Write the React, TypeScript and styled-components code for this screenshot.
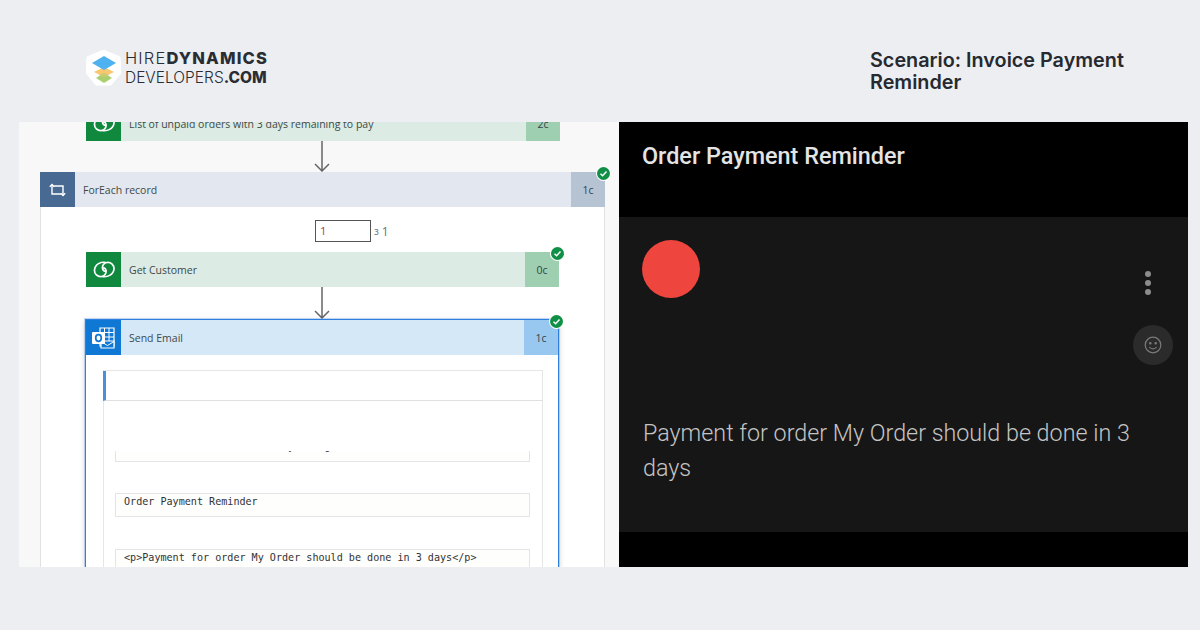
import React from 'react';
import styled, { createGlobalStyle } from 'styled-components';

const GlobalStyle = createGlobalStyle`
  html, body {
    margin: 0;
    padding: 0;
    background: #eceef2;
  }
  * {
    box-sizing: border-box;
  }
`;

const Page = styled.div`
  width: 1200px;
  height: 630px;
  overflow: hidden;
  background: #eceef2;
`;

const Header = styled.header`
  display: flex;
  align-items: center;
  justify-content: space-between;
  height: 122px;
  padding: 0 0 0 86px;
`;

const Logo = styled.div`
  display: flex;
  align-items: center;
  gap: 4px;
  margin-top: 14px;
`;

const LogoText = styled.div`
  font-family: Inter, sans-serif;
  color: #2a2d33;
  line-height: 20px;
  white-space: nowrap;
  b {
    font-weight: 800;
  }
  span {
    font-weight: 300;
  }
`;

const LogoLine = styled.div<{ $size: number; $spacing: number }>`
  font-size: ${({ $size }) => $size}px;
  letter-spacing: ${({ $spacing }) => $spacing}px;
`;

const Title = styled.h1`
  width: 330px;
  margin: 20px 0 0;
  padding-right: 40px;
  font-family: Inter, sans-serif;
  font-size: 19.8px;
  line-height: 22px;
  font-weight: 600;
  color: #26292f;
`;

const Screen = styled.main`
  display: grid;
  grid-template-columns: 600px 569px;
  height: 445px;
  margin-left: 19px;
`;

const FlowPanel = styled.section`
  display: flex;
  flex-direction: column;
  overflow: hidden;
  background: #f8f8f8;
  font-family: 'Open Sans', sans-serif;
`;

const TopCard = styled.div`
  margin: -16px 0 0 67px;
`;

const Connector = styled.svg<{ $indent: number }>`
  display: block;
  flex: none;
  margin-left: ${({ $indent }) => $indent}px;
`;

const Card = styled.div<{ $width: number; $indent?: number; $selected?: boolean }>`
  position: relative;
  display: flex;
  flex-direction: column;
  flex: none;
  width: ${({ $width }) => $width}px;
  margin-left: ${({ $indent }) => $indent ?? 0}px;
  ${({ $selected }) =>
    $selected &&
    `
    border: 1px solid #2f7fe0;
    border-bottom: 0;
    background: #fff;
    box-shadow: 0 0 0 1px rgba(70, 140, 230, 0.3), 0 2px 6px rgba(0, 0, 0, 0.2);
  `}
`;

const CardHead = styled.div<{ $bg: string }>`
  display: flex;
  align-items: center;
  height: 35px;
  background: ${({ $bg }) => $bg};
  font-size: 10.5px;
  color: #3d4a4a;
`;

const CardIcon = styled.div<{ $bg: string }>`
  display: flex;
  align-items: center;
  justify-content: center;
  flex: none;
  width: 35px;
  height: 35px;
  background: ${({ $bg }) => $bg};
`;

const CardLabel = styled.div`
  flex: 1;
  padding: 1px 0 0 8px;
`;

const Duration = styled.div<{ $bg: string }>`
  flex: none;
  width: 34px;
  height: 35px;
  padding-top: 1px;
  line-height: 35px;
  text-align: center;
  background: ${({ $bg }) => $bg};
  color: #34424c;
`;

const StatusBadge = styled.div`
  position: absolute;
  top: -5px;
  right: -5px;
  display: flex;
  align-items: center;
  justify-content: center;
  width: 13px;
  height: 13px;
  border-radius: 50%;
  background: #0f9046;
  box-shadow: 0 0 0 1px #fff;
`;

const Loop = styled.div`
  flex: none;
  width: 565px;
  height: 400px;
  margin-left: 21px;
  border: 1px solid #e2e2e2;
  border-top: 0;
  background: #fff;
`;

const LoopBody = styled.div`
  display: flex;
  flex-direction: column;
  padding-left: 45px;
`;

const Pager = styled.div`
  display: flex;
  align-items: center;
  gap: 2px;
  height: 22px;
  margin: 13px 0 10px 229px;
  color: #66727c;
  font-size: 10px;
`;

const PagerInput = styled.div`
  width: 56px;
  height: 22px;
  padding-left: 4px;
  border: 1px solid #555;
  font-size: 11.5px;
  line-height: 20px;
  color: #c0392b;
`;

const PagerLabel = styled.span`
  margin-left: 1px;
`;

const PagerTotal = styled.span`
  margin-left: 1px;
  font-size: 12px;
`;

const EmailBody = styled.div`
  height: 213px;
  padding: 15px 15px 0 17px;
`;

const Form = styled.div`
  height: 200px;
  border: 1px solid #e6e6e6;
  border-bottom: 0;
`;

const FormBar = styled.div`
  height: 30px;
  border-left: 3px solid #4a90d9;
  border-bottom: 1px solid #e0e0e0;
  margin: 0 0 50px -1px;
`;

const Field = styled.div<{ $height: number; $gap: number; $open?: boolean }>`
  height: ${({ $height }) => $height}px;
  margin: 0 12px ${({ $gap }) => $gap}px 11px;
  padding-left: 8px;
  overflow: hidden;
  border: 1px solid #e4e4e4;
  border-width: ${({ $open }) => ($open ? '0 1px 1px 1px' : '1px')};
  background: #fefefd;
  font-family: 'DejaVu Sans Mono', 'Liberation Mono', monospace;
  font-size: 10.1px;
  line-height: 16px;
  color: #333;
  white-space: pre;
`;

const ClippedLine = styled.div`
  margin-top: -12px;
`;

const DarkPanel = styled.section`
  display: flex;
  flex-direction: column;
  background: #000;
  font-family: Roboto, sans-serif;
`;

const DarkTop = styled.div`
  display: flex;
  align-items: center;
  height: 95px;
  padding: 0 0 27px 23px;
`;

const DarkTitle = styled.h2`
  margin: 0;
  font-size: 23.4px;
  font-weight: 500;
  color: #e4e4e4;
`;

const Message = styled.div`
  position: relative;
  height: 315px;
  padding: 23px 0 0 23px;
  background: #161616;
`;

const Avatar = styled.div`
  width: 58px;
  height: 58px;
  border-radius: 50%;
  background: #ee463e;
`;

const Dots = styled.div`
  position: absolute;
  top: 54px;
  right: 37px;
  display: flex;
  flex-direction: column;
  gap: 2.8px;
  span {
    width: 6px;
    height: 6px;
    border-radius: 50%;
    background: #8c8c8c;
  }
`;

const ReactionButton = styled.div`
  position: absolute;
  top: 108px;
  right: 15px;
  display: flex;
  align-items: center;
  justify-content: center;
  width: 40px;
  height: 40px;
  border-radius: 50%;
  background: #2b2b2b;
`;

const MessageText = styled.p`
  width: 510px;
  margin: 118px 0 0 1px;
  font-size: 23.3px;
  font-weight: 300;
  line-height: 35px;
  color: #c4c4c4;
`;

const HexLogo = () => (
  <svg width="35" height="36" viewBox="0 0 35 36">
    <path d="M17.500 0 34 7 35 23 25 35 10 35 0 23 1 7Z" fill="#fff" stroke="#fff" strokeLinejoin="round" />
    <path d="M18 23 26 28 18 33 10 28Z" fill="#a9cf6e" />
    <path d="M18 17 28 22 18 27 8 22Z" fill="#f7c772" />
    <path d="M18 23 23 25 18 27 13 25Z" fill="#c7cb6f" />
    <path d="M18 6 30 13 18 20 6 13Z" fill="#4fb2f0" />
  </svg>
);

const DataverseIcon = () => (
  <svg width="22" height="17" viewBox="0 0 22 17" fill="none" stroke="#fff" strokeWidth="1.700">
    <path d="M13 1.500C8 .5 2 3 1.500 9c-.3 4 3 7 7 6.500 3-.4 5-3 4.500-6-.3-2-2-3-3.500-2.500" />
    <path d="M9 15.500c5 1 11.500-1.500 12-7.500.3-4-3-7-7-6.500-3 .4-5 3-4.500 6 .3 2 2 3 3.500 2.500" />
  </svg>
);

const LoopIcon = () => (
  <svg width="17" height="14" viewBox="0 0 17 14" fill="none" stroke="#fff" strokeWidth="1.400">
    <path d="M3 1.500V11H12M14 12.500V3H5" />
    <path d="M.8 3.700 3 1.400l2.200 2.300M11.800 10.300l2.200 2.300 2.200-2.300" />
  </svg>
);

const OutlookIcon = () => (
  <svg width="23" height="22" viewBox="0 0 23 22">
    <path d="M8 1h14v18H8z" fill="none" stroke="#fff" strokeWidth="1.200" />
    <path d="M12.500 1v14M17 1v14M8 5.500h14M8 10h14" stroke="#fff" strokeWidth="1" />
    <path d="M9 14h13v7H9z" fill="#0f78d4" stroke="#fff" strokeWidth="1.200" />
    <path d="M9 14.500l6.500 4 6.500-4" fill="none" stroke="#fff" strokeWidth="1" />
    <rect x="0" y="5" width="13" height="12" rx="1" fill="#fff" />
    <ellipse cx="6.500" cy="11" rx="2.800" ry="3.300" fill="none" stroke="#0f78d4" strokeWidth="1.700" />
  </svg>
);

const Check = () => (
  <svg width="9" height="9" viewBox="0 0 9 9" fill="none" stroke="#fff" strokeWidth="1.500">
    <path d="M1.500 4.700 3.600 6.700 7.500 2.500" />
  </svg>
);

const Arrow = ({ height, indent }: { height: number; indent: number }) => (
  <Connector $indent={indent} width="16" height={height} viewBox={`0 0 16 ${height}`} fill="none" stroke="#666" strokeWidth="1.500">
    <path d={`M8 0V${height - 1}M1 ${height - 8}l7 7 7-7`} />
  </Connector>
);

const Smile = () => (
  <svg width="18" height="18" viewBox="0 0 18 18" fill="none" stroke="#7a7a7a" strokeWidth="1.200">
    <circle cx="9" cy="9" r="7.800" />
    <circle cx="6.300" cy="7.300" r="0.700" fill="#7a7a7a" />
    <circle cx="11.700" cy="7.300" r="0.700" fill="#7a7a7a" />
    <path d="M5.300 11c1 1.300 2.200 1.900 3.700 1.900s2.700-.6 3.700-1.900" />
  </svg>
);

export default function App() {
  return (
    <Page>
      <GlobalStyle />
      <Header>
        <Logo>
          <HexLogo />
          <LogoText>
            <LogoLine $size={16.5} $spacing={1.15}>
              <span>HIRE</span>
              <b>DYNAMICS</b>
            </LogoLine>
            <LogoLine $size={15.5} $spacing={0}>
              <span>DEVELOPERS</span>
              <b>.COM</b>
            </LogoLine>
          </LogoText>
        </Logo>
        <Title>Scenario: Invoice Payment Reminder</Title>
      </Header>
      <Screen>
        <FlowPanel>
          <TopCard>
            <Card $width={474}>
              <CardHead $bg="#dcebe3">
                <CardIcon $bg="#10893e">
                  <DataverseIcon />
                </CardIcon>
                <CardLabel>List of unpaid orders with 3 days remaining to pay</CardLabel>
                <Duration $bg="#9fcfb1">2c</Duration>
              </CardHead>
            </Card>
          </TopCard>
          <Arrow height={31} indent={295} />
          <Card $width={565} $indent={21}>
            <CardHead $bg="#e3e7ef">
              <CardIcon $bg="#486991">
                <LoopIcon />
              </CardIcon>
              <CardLabel>ForEach record</CardLabel>
              <Duration $bg="#b5c3d3">1c</Duration>
            </CardHead>
            <StatusBadge>
              <Check />
            </StatusBadge>
          </Card>
          <Loop>
            <LoopBody>
              <Pager>
                <PagerInput>1</PagerInput>
                <PagerLabel>з</PagerLabel>
                <PagerTotal>1</PagerTotal>
              </Pager>
              <Card $width={473}>
                <CardHead $bg="#dcebe3">
                  <CardIcon $bg="#10893e">
                    <DataverseIcon />
                  </CardIcon>
                  <CardLabel>Get Customer</CardLabel>
                  <Duration $bg="#9fcfb1">0c</Duration>
                </CardHead>
                <StatusBadge>
                  <Check />
                </StatusBadge>
              </Card>
              <Arrow height={32} indent={228} />
              <Card $width={474} $indent={-1} $selected>
                <CardHead $bg="#d5e8f8">
                  <CardIcon $bg="#0f78d4">
                    <OutlookIcon />
                  </CardIcon>
                  <CardLabel>Send Email</CardLabel>
                  <Duration $bg="#98c8ef">1c</Duration>
                </CardHead>
                <StatusBadge>
                  <Check />
                </StatusBadge>
                <EmailBody>
                  <Form>
                    <FormBar />
                    <Field $height={11} $gap={31} $open>
                      <ClippedLine>{'                           y     g'}</ClippedLine>
                    </Field>
                    <Field $height={24} $gap={32}>Order Payment Reminder</Field>
                    <Field $height={40} $gap={0}>{'<p>Payment for order My Order should be done in 3 days</p>'}</Field>
                  </Form>
                </EmailBody>
              </Card>
            </LoopBody>
          </Loop>
        </FlowPanel>
        <DarkPanel>
          <DarkTop>
            <DarkTitle>Order Payment Reminder</DarkTitle>
          </DarkTop>
          <Message>
            <Avatar />
            <Dots>
              <span />
              <span />
              <span />
            </Dots>
            <ReactionButton>
              <Smile />
            </ReactionButton>
            <MessageText>Payment for order My Order should be done in 3 days</MessageText>
          </Message>
        </DarkPanel>
      </Screen>
    </Page>
  );
}
